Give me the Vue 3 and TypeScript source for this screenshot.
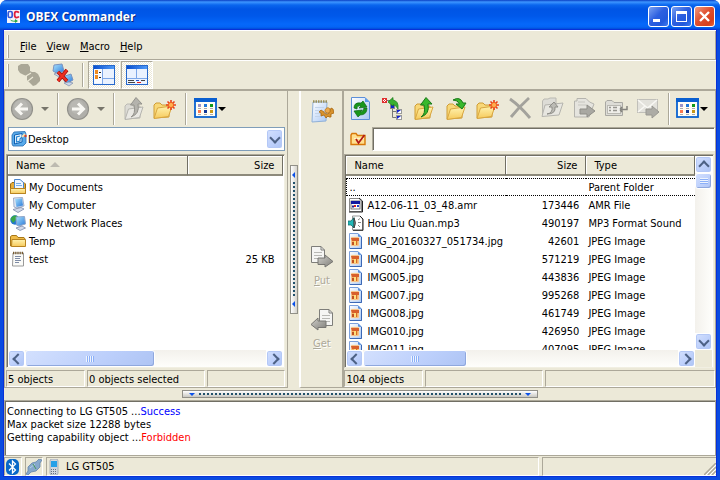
<script setup lang="ts">
import { ref } from 'vue'

interface Item {
  icon: string
  name: string
  size: string
  type?: string
}

const menus: string[] = ['File', 'View', 'Macro', 'Help']

const localItems: Item[] = [
  { icon: 'docs', name: 'My Documents', size: '' },
  { icon: 'computer', name: 'My Computer', size: '' },
  { icon: 'network', name: 'My Network Places', size: '' },
  { icon: 'folder', name: 'Temp', size: '' },
  { icon: 'text', name: 'test', size: '25 KB' },
]

const remoteItems: Item[] = [
  { icon: '', name: '..', size: '', type: 'Parent Folder' },
  { icon: 'program', name: 'A12-06-11_03_48.amr', size: '173446', type: 'AMR File' },
  { icon: 'sound', name: 'Hou Liu Quan.mp3', size: '490197', type: 'MP3 Format Sound' },
  { icon: 'jpeg', name: 'IMG_20160327_051734.jpg', size: '42601', type: 'JPEG Image' },
  { icon: 'jpeg', name: 'IMG004.jpg', size: '571219', type: 'JPEG Image' },
  { icon: 'jpeg', name: 'IMG005.jpg', size: '443836', type: 'JPEG Image' },
  { icon: 'jpeg', name: 'IMG007.jpg', size: '995268', type: 'JPEG Image' },
  { icon: 'jpeg', name: 'IMG008.jpg', size: '461749', type: 'JPEG Image' },
  { icon: 'jpeg', name: 'IMG010.jpg', size: '426950', type: 'JPEG Image' },
  { icon: 'jpeg', name: 'IMG011.jpg', size: '407095', type: 'JPEG Image' },
]

const remoteTools = [
  { icon: 'refresh', label: 'Refresh', off: false },
  { icon: 'tree', label: 'Root folder', off: false },
  { icon: 'up', label: 'Up one level', off: false },
  { icon: 'into', label: 'Open folder', off: false },
  { icon: 'newfolder', label: 'New folder', off: false },
  { icon: 'delete', label: 'Delete', off: true },
  { icon: 'move', label: 'Move', off: true },
  { icon: 'copyto', label: 'Copy to', off: true },
  { icon: 'rename', label: 'Rename', off: true },
  { icon: 'send', label: 'Send', off: true },
]

const location = ref('Desktop')
const address = ref('')
</script>

<template>
  <svg class="defs" aria-hidden="true">
    <defs>
      <linearGradient id="gFolder" x1="0" y1="0" x2="0" y2="1">
        <stop offset="0" stop-color="#fff3b0" /><stop offset="1" stop-color="#f6ca5c" />
      </linearGradient>
      <linearGradient id="gGray" x1="0" y1="0" x2="1" y2="1">
        <stop offset="0" stop-color="#d0cfca" /><stop offset="1" stop-color="#7f7e79" />
      </linearGradient>
      <linearGradient id="gBlue" x1="0" y1="0" x2="1" y2="1">
        <stop offset="0" stop-color="#a9e4ff" /><stop offset="1" stop-color="#2a78d8" />
      </linearGradient>
      <linearGradient id="gPage" x1="0" y1="0" x2="1" y2="1">
        <stop offset="0" stop-color="#ffffff" /><stop offset="1" stop-color="#a9c8f5" />
      </linearGradient>
      <linearGradient id="gBar" x1="0" y1="0" x2="1" y2="0">
        <stop offset="0" stop-color="#0a4fd0" /><stop offset="1" stop-color="#4f9af8" />
      </linearGradient>
    </defs>

    <symbol id="logo" viewBox="0 0 13 13">
      <rect width="13" height="13" fill="#f3f4fc" />
      <rect x="1.200" y="1.500" width="4" height="6" rx="1.500" fill="none" stroke="#3558d8" stroke-width="1.700" />
      <path d="M12 2.600Q10.800 1.500 9 1.600Q7.600 1.800 7.600 4.500Q7.600 7.400 9.200 7.600Q11 7.700 12 6.500" fill="none" stroke="#e0203c" stroke-width="1.800" />
      <path d="M3 9.500Q5 11 8 10.500V9L11 11L8 13V11.800Q4 12 3 9.500" fill="#28a745" />
    </symbol>
    <symbol id="connect" viewBox="0 0 24 24">
      <path d="M0 3L3 1L10 1L12 4L12 8L14 9L17 9L20 11L22 15L22 18L18 22L15 23L13 21L11 19L9 17L9 13L6 12L2 10L0 7Z" fill="#aaa797" />
      <path d="M8 13L13 10M10 18L15 14" stroke="#ece9d8" stroke-width="1.200" />
    </symbol>
    <symbol id="disconnect" viewBox="0 0 24 24">
      <path d="M3 2L11 1L13 8L7 11L2 8Z" fill="url(#gBlue)" stroke="#7b93c0" />
      <path d="M3 11L8 9L12 12L8 14Z" fill="#cdd6e8" stroke="#7d8cab" stroke-width=".7" />
      <path d="M14 13L20 11L22 17L17 20L13 18Z" fill="url(#gBlue)" stroke="#7b93c0" />
      <path d="M13 20L18 19L22 20L18 23Z" fill="#cbd5e8" stroke="#7d8cab" stroke-width=".7" />
      <path d="M7 9L16 18M16 7L7 18" stroke="#9e1010" stroke-width="3.600" />
      <path d="M7 9L16 18M16 7L7 18" stroke="#ee3020" stroke-width="2.200" />
    </symbol>
    <symbol id="pane1" viewBox="0 0 22 20">
      <rect x=".5" y=".5" width="21" height="19" fill="#eaf2ff" stroke="#2668cc" />
      <rect x="1" y="1" width="20" height="3" fill="url(#gBar)" />
      <path d="M10 13.500H21" stroke="#7da7e8" />
      <rect x="1" y="4" width="9" height="14" fill="#f7faff" />
      <path d="M9.500 4V19" stroke="#7da7e8" />
      <rect x="2" y="5" width="3" height="4" fill="#ee8a20" /><rect x="2" y="10" width="3" height="4" fill="#ee8a20" />
      <path d="M6 7.500H8M6 12.500H8" stroke="#222" />
    </symbol>
    <symbol id="pane2" viewBox="0 0 22 20">
      <rect x=".5" y=".5" width="21" height="19" fill="#eaf2ff" stroke="#2668cc" />
      <rect x="1" y="1" width="20" height="3" fill="url(#gBar)" />
      <path d="M10.500 4V13M1 13.500H21" stroke="#7da7e8" />
      <path d="M2 15.500H8M15 15.500H19" stroke="#444" /><path d="M2 17.500H9" stroke="#444" />
      <path d="M11 17.500H15" stroke="#e02020" /><path d="M10 15.500H13" stroke="#2050d0" />
    </symbol>
    <symbol id="back" viewBox="0 0 24 24">
      <circle cx="12" cy="12" r="10.500" fill="#b0afaa" stroke="#93928c" stroke-width="1.200" />
      <circle cx="11" cy="10" r="7" fill="#c2c1bc" opacity=".5" />
      <path d="M18 12H7M12 6.500L6.500 12L12 17.500" fill="none" stroke="#f8f7f3" stroke-width="3" />
    </symbol>
    <symbol id="forward" viewBox="0 0 24 24">
      <circle cx="12" cy="12" r="10.500" fill="#b0afaa" stroke="#93928c" stroke-width="1.200" />
      <circle cx="11" cy="10" r="7" fill="#c2c1bc" opacity=".5" />
      <path d="M6 12H17M12 6.500L17.500 12L12 17.500" fill="none" stroke="#f8f7f3" stroke-width="3" />
    </symbol>
    <symbol id="fold" viewBox="0 0 24 24">
      <path d="M3 22V9L5 7H9L11 9H18V21Z" fill="#f8d878" stroke="#cf9c34" />
      <path d="M3 22.500L6.500 12L21 10L17.500 20.500Z" fill="url(#gFolder)" stroke="#d8a640" />
    </symbol>
    <symbol id="foldgray" viewBox="0 0 24 24">
      <path d="M3 22V9L5 7H9L11 9H18V21Z" fill="#dcdbd5" stroke="#bbbab4" />
      <path d="M3 22.500L6.500 12L21 10L17.500 20.500Z" fill="#e9e8e3" stroke="#b5b4ae" />
    </symbol>
    <symbol id="up" viewBox="0 0 24 24">
      <use href="#fold" />
      <path d="M9 20Q14 17 12 8H8.500L14 .5L20 7H16Q18 17 9 20Z" fill="#39b82c" stroke="#187818" />
    </symbol>
    <symbol id="upoff" viewBox="0 0 24 24">
      <use href="#foldgray" />
      <path d="M9 20Q14 17 12 8H8.500L14 .5L20 7H16Q18 17 9 20Z" fill="#b4b3ad" stroke="#93928c" />
    </symbol>
    <symbol id="into" viewBox="0 0 24 24">
      <use href="#fold" />
      <path d="M9 3Q16 -1 19 6H22L18 12L12 7H15.500Q14 3 9 3Z" fill="#39b82c" stroke="#187818" />
    </symbol>
    <symbol id="newfolder" viewBox="0 0 24 24">
      <g transform="translate(-2 -1)"><use href="#fold" width="24" height="24" /></g>
      <path d="M18 3V13M13 8H23M14.500 4.500L21.500 11.500M21.500 4.500L14.500 11.500" stroke="#e8401c" stroke-width="1.600" />
      <circle cx="18" cy="8" r="2.600" fill="#ffb050" stroke="#f06020" />
    </symbol>
    <symbol id="views" viewBox="0 0 24 24">
      <rect x="1" y="2" width="21" height="18" fill="#fffdf4" stroke="#0a63d0" stroke-width="1.800" />
      <rect x="0" y="1" width="23" height="4" fill="#0a5fd0" />
      <path d="M4 7H7V10H4Z" fill="#9a94c8" /><path d="M10 7H13V10H10Z" fill="#2078d8" /><path d="M16 7H19V10H16Z" fill="#109818" />
      <path d="M4 13H7V16H4Z" fill="#f87850" /><path d="M10 13H13V16H10Z" fill="#103898" /><path d="M16 13H19V16H16Z" fill="#c89818" />
      <path d="M4 11.500H7M10 11.500H13M16 11.500H19M4 17.500H7M10 17.500H13M16 17.500H19" stroke="#aaa" />
    </symbol>
    <symbol id="refresh" viewBox="0 0 24 24">
      <path d="M3.500 .5H17L21.500 5V22.500H3.500Z" fill="url(#gPage)" stroke="#5c8fd8" />
      <path d="M17 .5V5H21.500Z" fill="#5c9ae8" />
      <path d="M6 11Q6 5 13 6L15 4L19 10L11 11L13 9Q9 8 9 12Z" fill="#18961c" stroke="#0d6814" stroke-width=".7" />
      <path d="M19 11Q19 18 12 18L10 20L6 14L14 13L12 15Q15 15 16 11Z" fill="#18961c" stroke="#0d6814" stroke-width=".7" />
    </symbol>
    <symbol id="tree" viewBox="0 0 24 24">
      <path d="M7 3.500H10M12.500 11V20.500H17M12.500 14.500H17" fill="none" stroke="#777" />
      <rect x="2.500" y="1.500" width="4" height="4" fill="#fff" stroke="#e03030" /><path d="M3 2L6 5M6 2L3 5" stroke="#e03030" />
      <rect x="10.500" y="7.500" width="4" height="4" fill="#1020d0" stroke="#888" />
      <path d="M8 5L13 .5V3Q19 4 18 12Q16 8 13 7.500V9Z" fill="#38b030" stroke="#187818" stroke-width=".7" />
      <rect x="16.500" y="12.500" width="5" height="4" fill="#1020d0" stroke="#999" /><path d="M17 16L21 13V16Z" fill="#fff" />
      <rect x="16.500" y="18.500" width="5" height="4" fill="#1020d0" stroke="#999" /><path d="M17 22L21 19V22Z" fill="#fff" />
    </symbol>
    <symbol id="delete" viewBox="0 0 24 24">
      <path d="M2 2Q12 9 22 21M21 1Q12 9 3 20" fill="none" stroke="#a3a29c" stroke-width="2.800" />
    </symbol>
    <symbol id="move" viewBox="0 0 24 24">
      <path d="M2.500 18V4L4 2H8L10 1H16V7H19" fill="#dddcd6" stroke="#bab9b2" />
      <path d="M2 19.500L5 8L23 6L19 18Z" fill="#e7e6e0" stroke="#b5b4ae" />
      <path d="M7 17Q13 16 12 10H9L14 5L18 10H15Q16 17 7 17Z" fill="#bcbbb5" stroke="#8f8e88" />
    </symbol>
    <symbol id="copyto" viewBox="0 0 24 24">
      <path d="M2.500 20V4H5V1.500H14L17.500 5L22 7L17 20Z" fill="#e5e4de" stroke="#b5b4ae" />
      <path d="M6 5H13M6 8H15" stroke="#c7c6c0" />
      <path d="M8 12H15V8L23 14L15 20V17H8Z" fill="#a9a8a2" stroke="#8f8e88" />
    </symbol>
    <symbol id="rename" viewBox="0 0 24 24">
      <path d="M1.500 18.500V5L3 3.500H8L10 5.500H18.500V18.500Z" fill="#dddcd6" stroke="#a9a8a2" />
      <rect x="3.500" y="8.500" width="13" height="8" fill="#efeee9" stroke="#bab9b2" />
      <path d="M5 10.500H7M5 13.500H7M9 10.500H13M9 13.500H13" stroke="#96958f" stroke-width="1.500" />
      <path d="M16 12.500H23V9M16 12.500L18 10M16 12.500L18 15" fill="none" stroke="#85847e" stroke-width="1.500" />
    </symbol>
    <symbol id="send" viewBox="0 0 24 24">
      <rect x="1.500" y="2.500" width="20" height="13" fill="#e3e2dc" stroke="#c0bfb9" />
      <path d="M2 3L11.500 11L21 3M2 15L9 9M21 15L14 9" fill="none" stroke="#f9f8f4" stroke-width="1.500" />
      <path d="M10 12H16V9L23 15L16 21V18H10Z" fill="#adaca6" stroke="#999892" />
    </symbol>
    <symbol id="notepad" viewBox="0 0 24 24">
      <path d="M3 3H17L16 22L2 23Z" fill="url(#gPage)" stroke="#8fb0d8" />
      <path d="M3 2.500H17" stroke="#9a8f58" stroke-width="2.500" stroke-dasharray="1.500 1" />
      <path d="M5 8.500H14M5 11.500H10M5 14.500H12M5 17.500H12" stroke="#c3d4ea" />
      <path d="M9 13L11 11L14 13Q14 15 17 15Q20 15 20 12L21 9L23 10L24 14L21 15L21 18H19L18 17L16 19L14 16L11 17L11 14Z" fill="#d8922c" stroke="#a8660e" stroke-width=".8" />
      <path d="M15 11Q17 7 20 10V13Q18 15 15 13Z" fill="#eda94c" stroke="#b87820" stroke-width=".8" />
    </symbol>
    <symbol id="put" viewBox="0 0 24 24">
      <path d="M1.500 1.500H11L14.500 5V17.500H1.500Z" fill="#f5f5f3" stroke="#7e7e7a" /><path d="M11 1.500V5H14.500" fill="none" stroke="#7e7e7a" />
      <path d="M4 7.500H12M4 10.500H12M4 13.500H9" stroke="#b8b8b4" />
      <path d="M8 13H15V10L23 16.500L15 22V19.500H8Z" fill="url(#gGray)" stroke="#777672" />
    </symbol>
    <symbol id="get" viewBox="0 0 24 24">
      <path d="M9.500 1.500H19L22.500 5V17.500H9.500Z" fill="#f5f5f3" stroke="#7e7e7a" /><path d="M19 1.500V5H22.500" fill="none" stroke="#7e7e7a" />
      <path d="M12 7.500H20M12 10.500H20M14 13.500H20" stroke="#b8b8b4" />
      <path d="M16 13H8V10L1 16.500L8 22V19.500H16Z" fill="url(#gGray)" stroke="#777672" />
    </symbol>

    <symbol id="desktop" viewBox="0 0 16 16">
      <path d="M3 1L14 .5L15 3V12L12 15H2L1 13V4Z" fill="#58aaea" stroke="#2a6cb0" stroke-width=".8" />
      <path d="M3.500 4L11 2.500V11L3.500 13Z" fill="#e8f5ff" stroke="#0f5fb0" />
      <path d="M9 5L5.500 6V11L9 10V8L13 4" fill="none" stroke="#2582d0" stroke-width="1.200" />
      <path d="M11 6L14 3" stroke="#f6e0b0" stroke-width="2" /><circle cx="14.500" cy="5" r="1.200" fill="#e03c20" />
    </symbol>
    <symbol id="docs" viewBox="0 0 16 16">
      <path d="M.5 5L2 3.500H14L15.500 5V14.500H.5Z" fill="#e6ad38" stroke="#9c6c12" />
      <path d="M4.500 .5H10L13.500 3.500V10H4.500Z" fill="#eef6ff" stroke="#4b86cc" /><path d="M6 4.500H11M6 6.500H12" stroke="#77aee8" />
      <path d="M.500 9.500H15.500V14.500H.5Z" fill="url(#gFolder)" stroke="#b98420" />
    </symbol>
    <symbol id="computer" viewBox="0 0 16 16">
      <path d="M3.500 1L12.500 .5L14 9L7 11L4 10Z" fill="#dfe6f2" stroke="#8d9dbd" stroke-width=".8" />
      <path d="M5 2L12 1.200L13 8.500L6.500 10Z" fill="url(#gBlue)" />
      <path d="M3 12.500L11 10.500L14 12L8 15.500Z" fill="#d3dae9" stroke="#7c89a9" stroke-width=".8" />
    </symbol>
    <symbol id="network" viewBox="0 0 16 16">
      <circle cx="5" cy="5" r="4.700" fill="#2476d0" /><path d="M.5 4Q3 -1 7.500 1L6 5L3 8Z" fill="#38a848" />
      <path d="M6 2L14.500 1.500L15.500 9L9 11L6.500 10Z" fill="url(#gBlue)" stroke="#90a4c6" />
      <path d="M6 13L12 11L15.500 13L10 15.500Z" fill="#d3dae9" stroke="#7c89a9" stroke-width=".8" />
    </symbol>
    <symbol id="folder" viewBox="0 0 16 16">
      <path d="M.5 13V3.500L2 2.500H6.500L8 4.500H14L15 6V13Z" fill="#f0bc48" stroke="#a87818" />
      <path d="M2 6.500H15.500V13.500H1.500Z" fill="url(#gFolder)" stroke="#b98420" />
    </symbol>
    <symbol id="text" viewBox="0 0 16 16">
      <path d="M3 2H13.500V15H2.500Z" fill="#fbfbf8" stroke="#9a9a9a" />
      <path d="M3 2H13" stroke="#775b30" stroke-width="2.500" stroke-dasharray="1.200 1" />
      <path d="M5 5.500H11M5 7.500H10M5 9.500H11M5 11.500H9" stroke="#7e8ba5" />
    </symbol>
    <symbol id="program" viewBox="0 0 16 16">
      <path d="M1.500 1.500H11L13.500 4V14.500H1.500Z" fill="#fff" stroke="#888" /><path d="M1 15H14.500V4L11 1" fill="none" stroke="#222" />
      <rect x="3" y="4" width="9" height="8" fill="#fff" stroke="#555" stroke-width=".8" /><rect x="3" y="4" width="9" height="3" fill="#1018a0" />
      <path d="M4 8.500H6V10.500H4Z" fill="#20208c" /><path d="M6 8H8V10H6Z" fill="#d02020" /><path d="M9 8H11V10H9Z" fill="#2040d0" />
    </symbol>
    <symbol id="sound" viewBox="0 0 16 16">
      <path d="M4.500 1H12L14.500 4V15H4.500Z" fill="#fff" stroke="#999" /><path d="M5 15.300H15V4L12 1" fill="none" stroke="#222" />
      <path d="M0 6L3 6L6 2.500V13L3 10H0Z" fill="#20b8b8" stroke="#1a6c6c" stroke-width=".8" /><path d="M6 3Q9 8 6 13Z" fill="#999" stroke="#333" stroke-width=".8" />
      <path d="M10 7.500H13M10 5L12 3.500M10 10L12 12" stroke="#888" />
    </symbol>
    <symbol id="jpeg" viewBox="0 0 16 16">
      <path d="M1.500 .5H10L13.500 4V15.500H1.500Z" fill="url(#gPage)" stroke="#7ba0dc" /><path d="M13.500 4V15.500H2" fill="none" stroke="#3c68b4" />
      <path d="M10 .5V4H13.500Z" fill="#5890dc" />
      <rect x="3" y="4" width="8" height="9" fill="#f4b060" stroke="#f8e7d5" stroke-width=".7" />
      <path d="M3 5H11V8H4Z" fill="#d8602c" /><path d="M4 9H6V12H4Z" fill="#c05020" /><path d="M8 8H9V12H8Z" fill="#d86a24" /><path d="M6 8H8V12H6Z" fill="#ffdf80" />
    </symbol>
    <symbol id="check" viewBox="0 0 16 16">
      <path d="M1 13.500V4L2 2.500H6L7.500 4.500H15V13.500Z" fill="#ffdf8e" stroke="#d87808" stroke-width="1.400" />
      <path d="M4 7.500H14" stroke="#fff4c8" /><path d="M6 8L8.500 12L14.500 4" fill="none" stroke="#b01818" stroke-width="1.700" />
    </symbol>
    <symbol id="bluetooth" viewBox="0 0 16 16">
      <rect x="1" width="13" height="16" rx="5" fill="#0868c8" />
      <path d="M4 4.500L10.500 11L7.500 14V2L10.500 5L4 11.500" fill="none" stroke="#fff" stroke-width="1.300" />
    </symbol>
    <symbol id="plug" viewBox="0 0 16 16">
      <path d="M0 15L2 12L2 8L6 4L10 3L13 0L16 1L14 4L14 8L10 12L5 13L2 16Z" fill="#86a8cc" stroke="#6384aa" stroke-width=".8" />
      <path d="M4 9L9 5" stroke="#b4d0e8" /><path d="M7 5L10 10" stroke="#49985a" />
    </symbol>
    <symbol id="phone" viewBox="0 0 16 16">
      <rect x="3" y="0" width="8" height="16" rx="2" fill="#d2d6de" stroke="#9aa2af" stroke-width=".8" />
      <rect x="4" y="2" width="6" height="6" fill="#26a0e8" />
      <path d="M4 10.500H10M4 12.500H10M4 14.500H10" stroke="#667080" stroke-dasharray="1 1" />
    </symbol>
  </svg>

  <div class="window">
    <header class="titlebar">
      <svg class="logo"><use href="#logo" /></svg>
      <h1>OBEX Commander</h1>
      <div class="winbuttons">
        <button aria-label="Minimize"><svg viewBox="0 0 19 19"><path d="M4 12H11V15H4Z" fill="#fff" /></svg></button>
        <button aria-label="Maximize"><svg viewBox="0 0 19 19"><path d="M4 4H15V15H4Z M5 7V14H14V7Z" fill="#fff" fill-rule="evenodd" /></svg></button>
        <button class="close" aria-label="Close"><svg viewBox="0 0 19 19"><path d="M5 5L14 14M14 5L5 14" stroke="#fff" stroke-width="2.400" /></svg></button>
      </div>
    </header>

    <div class="client">
      <nav class="menubar">
        <span class="grip" />
        <button v-for="m in menus" :key="m"><u>{{ m[0] }}</u>{{ m.slice(1) }}</button>
      </nav>

      <div class="mainbar">
        <span class="grip" />
        <button class="tool" aria-label="Connect" disabled><svg class="i24"><use href="#connect" /></svg></button>
        <button class="tool" aria-label="Disconnect"><svg class="i24"><use href="#disconnect" /></svg></button>
        <span class="sep" />
        <button class="toggle" aria-label="Show local panel" aria-pressed="true"><svg><use href="#pane1" /></svg></button>
        <button class="toggle" aria-label="Show log panel" aria-pressed="true"><svg><use href="#pane2" /></svg></button>
      </div>

      <main class="work">
        <section class="panel local">
          <div class="tools">
            <div class="group">
              <button class="tool" aria-label="Back"><svg class="i24"><use href="#back" /></svg></button>
              <button class="drop dim" aria-label="Back history" />
            </div>
            <span class="sep" />
            <div class="group">
              <button class="tool" aria-label="Forward"><svg class="i24"><use href="#forward" /></svg></button>
              <button class="drop dim" aria-label="Forward history" />
            </div>
            <span class="sep" />
            <div class="group spaced">
              <button class="tool" aria-label="Up one level"><svg class="i24"><use href="#upoff" /></svg></button>
              <button class="tool" aria-label="New folder"><svg class="i24"><use href="#newfolder" /></svg></button>
            </div>
            <span class="sep wide" />
            <button class="tool" aria-label="Views"><svg class="i24"><use href="#views" /></svg></button>
            <button class="drop tight" aria-label="Choose view" />
          </div>

          <div class="combo">
            <svg class="i16"><use href="#desktop" /></svg>
            <select v-model="location" aria-label="Local folder"><option>Desktop</option></select>
            <span class="arrow down" />
          </div>

          <div class="list">
            <div class="viewport">
              <div class="rows">
                <table>
                  <colgroup><col class="c-local" /><col /></colgroup>
                  <thead><tr><th>Name <i class="sorted" /></th><th class="num">Size</th></tr></thead>
                  <tbody>
                    <tr v-for="f in localItems" :key="f.name">
                      <td><span class="cell"><svg class="i16"><use :href="'#' + f.icon" /></svg>{{ f.name }}</span></td>
                      <td class="num">{{ f.size }}</td>
                    </tr>
                  </tbody>
                </table>
              </div>
            </div>
            <div class="hscroll">
              <button class="arrow left" aria-label="Scroll left" />
              <span class="track"><span class="thumb half" /></span>
              <button class="arrow right" aria-label="Scroll right" />
            </div>
          </div>
          <footer class="counts"><span>5 objects</span><span>0 objects selected</span><span /></footer>
        </section>

        <div class="vsplit"><span class="handle"><i /></span></div>

        <aside class="transfer">
          <button class="tool" aria-label="Edit"><svg class="i24"><use href="#notepad" /></svg></button>
          <div class="moves">
            <button disabled><svg class="i24"><use href="#put" /></svg><span><u>P</u>ut</span></button>
            <button disabled><svg class="i24"><use href="#get" /></svg><span><u>G</u>et</span></button>
          </div>
        </aside>

        <section class="panel remote">
          <div class="tools">
            <button v-for="t in remoteTools" :key="t.icon" class="tool" :aria-label="t.label" :disabled="t.off">
              <svg class="i24"><use :href="'#' + t.icon" /></svg>
            </button>
            <span class="sep" />
            <div class="group">
              <button class="tool" aria-label="Views"><svg class="i24"><use href="#views" /></svg></button>
              <button class="drop tight" aria-label="Choose view" />
            </div>
          </div>

          <div class="address">
            <button class="tool" aria-label="Go to folder"><svg class="i16"><use href="#check" /></svg></button>
            <input v-model="address" type="text" aria-label="Remote folder path" />
          </div>

          <div class="list">
            <div class="viewport">
              <div class="rows">
                <table>
                  <colgroup><col class="c-name" /><col class="c-size" /><col /></colgroup>
                  <thead><tr><th>Name</th><th class="num">Size</th><th>Type</th></tr></thead>
                  <tbody>
                    <tr v-for="(f, i) in remoteItems" :key="f.name" :class="{ focused: i === 0 }">
                      <td><span class="cell"><svg v-if="f.icon" class="i16"><use :href="'#' + f.icon" /></svg>{{ f.name }}</span></td>
                      <td class="num">{{ f.size }}</td>
                      <td>{{ f.type }}</td>
                    </tr>
                  </tbody>
                </table>
              </div>
              <div class="vscroll">
                <button class="arrow up" aria-label="Scroll up" />
                <span class="track"><span class="thumb short" /></span>
                <button class="arrow down" aria-label="Scroll down" />
              </div>
            </div>
            <div class="hscroll">
              <button class="arrow left" aria-label="Scroll left" />
              <span class="track"><span class="thumb third" /></span>
              <button class="arrow right" aria-label="Scroll right" />
              <span class="corner" />
            </div>
          </div>
          <footer class="counts"><span>104 objects</span><span /><span /></footer>
        </section>
      </main>

      <div class="hsplit"><span class="handle"><i /></span></div>

      <section class="log" aria-label="Log">
        <p>Connecting to LG GT505 ...<span class="ok">Success</span></p>
        <p>Max packet size 12288 bytes</p>
        <p>Getting capability object ...<span class="bad">Forbidden</span></p>
      </section>

      <footer class="status">
        <span><svg class="i16"><use href="#bluetooth" /></svg></span>
        <span><svg class="i16"><use href="#plug" /></svg></span>
        <span class="device"><svg class="i16"><use href="#phone" /></svg>LG GT505</span>
        <span class="last"><svg class="sizer" viewBox="0 0 12 12"><path d="M0 12L12 0M4 12L12 4M8 12L12 8" stroke="#aca899" stroke-width="1.500" /><path d="M2 12L12 2M6 12L12 6M10 12L12 10" stroke="#fff" /></svg></span>
      </footer>
    </div>
  </div>
</template>

<style>
body { margin: 0; background: #fff; }
</style>

<style scoped>
* { box-sizing: border-box; }
.defs { position: absolute; width: 0; height: 0; }
button, input, select { font: inherit; color: inherit; margin: 0; padding: 0; border: 0; background: none; border-radius: 0; }
svg { display: block; flex: none; }
.i24 { width: 24px; height: 24px; }
.i16 { width: 16px; height: 16px; }

.window {
  display: flex; flex-direction: column; height: 100vh; min-width: 640px; overflow: hidden;
  border-radius: 7px 7px 0 0; background: #0a4be0; color: #000;
  font: 11px/13px Tahoma, "DejaVu Sans Condensed", "Liberation Sans", sans-serif;
}
.titlebar {
  display: flex; align-items: center; flex: none; height: 30px; padding: 3px 5px 0 7px;
  background: linear-gradient(#0a3fc4 0, #3d95ff 2px, #0a66ee 5px, #0055e5 9px, #0058ea 16px, #0568fa 24px, #0464f6 27px, #0040c8 30px);
}
.logo { width: 13px; height: 13px; }
h1 { flex: 1; margin: 0 0 0 6px; color: #fff; font: bold 12px/16px "Trebuchet MS", "Open Sans", sans-serif; text-shadow: 1px 1px #0a2a80; }
.winbuttons { display: flex; gap: 2px; }
.winbuttons button {
  width: 21px; height: 21px; border: 1px solid #fff; border-radius: 3px;
  background: linear-gradient(135deg, #7ba2f2, #2d5fe0 45%, #2259dc 75%, #3d7cf0);
}
.winbuttons .close { background: linear-gradient(135deg, #f09a80, #e05030 45%, #d8401c 80%, #e86838); }

.client {
  display: flex; flex-direction: column; flex: 1; min-height: 0; margin: 0 4px 4px;
  background: #ece9d8; border-top: 1px solid #fff; box-shadow: 0 0 0 1px #0831d9;
}
.menubar { display: flex; align-items: center; flex: none; height: 29px; padding: 2px 0 0 3px; border-bottom: 1px solid #aca899; border-right: 1px solid #aca899; }
.menubar button { padding: 0 5px; height: 20px; }
.menubar .grip { margin-right: 6px; }
.grip { width: 2px; height: 23px; border-left: 1px solid #fff; border-right: 1px solid #aca899; }
.mainbar { display: flex; align-items: center; flex: none; height: 30px; padding-left: 3px; border-top: 1px solid #fff; border-bottom: 1px solid #aca899; }
.mainbar .tool { margin-left: 9px; }
.mainbar .sep { height: 24px; margin: 0 4px 0 7px; }
.sep { flex: none; width: 2px; height: 32px; border-left: 1px solid #aca899; border-right: 1px solid #fff; }
.toggle {
  display: grid; place-items: center; width: 32px; height: 28px; margin-right: 1px;
  border: 1px solid; border-color: #aca899 #fff #fff #aca899;
  background: repeating-conic-gradient(#fff 0 25%, #ece9d8 0 50%) 0 0 / 2px 2px;
}
.toggle svg { width: 22px; height: 20px; }
.tool { flex: none; }

.work { display: flex; flex: 1; min-height: 0; border-top: 1px solid #aca899; }
.panel { display: flex; flex-direction: column; min-width: 0; padding: 0 2px 0 1px; border: 1px solid #aca899; border-top: 0; }
.local { flex: 282 1 0; }
.remote { flex: 374 1 0; padding: 0; }
.tools { display: flex; align-items: center; flex: none; height: 35px; }
.local .tools { padding-left: 4px; }
.local .sep { margin: 0 7px 0 1px; }
.local .sep.wide { margin-left: 8px; }
.group { display: flex; align-items: center; }
.spaced { gap: 7px; }
.remote .tools { gap: 8px; padding-left: 4px; }
.remote .group { margin-left: -2px; }
.drop { display: grid; place-items: center; width: 22px; height: 24px; }
.drop::before { content: ""; border: solid transparent; border-width: 4px 4px 0; border-top-color: #000; }
.drop.dim::before { border-top-color: #77756b; }
.drop.tight { width: 8px; }

.combo { display: grid; grid-template-columns: 19px 1fr 17px; align-items: center; flex: none; height: 24px; margin: 1px 0 3px 2px; padding: 1px 1px 1px 2px; border: 1px solid #7f9db9; background: #fff; }
.combo > svg { grid-area: 1 / 1; pointer-events: none; z-index: 1; }
.combo select { grid-area: 1 / 1 / 2 / 4; height: 20px; padding-left: 17px; appearance: none; }
.combo > .arrow { grid-area: 1 / 3; height: 20px; pointer-events: none; }
.address { display: flex; align-items: center; flex: none; height: 25px; margin-bottom: 3px; padding-left: 6px; }
.address input { flex: 1; min-width: 0; height: 24px; margin-left: 6px; padding: 0 3px; background: #fff; border: 1px solid; border-color: #aca899 #fff #fff #aca899; box-shadow: inset 1px 1px #716f64; outline: 0; }

.list { display: flex; flex-direction: column; flex: 1; min-height: 0; background: #fff; border: 1px solid; border-color: #aca899 #f1efe2 #f1efe2 #aca899; box-shadow: inset 1px 1px #716f64; padding: 1px 1px 0 1px; }
.remote .list { margin-right: 1px; }
.viewport { display: flex; flex: 1; min-height: 0; }
.rows { flex: 1; min-width: 0; overflow: hidden; }
table { width: 100%; table-layout: fixed; border-collapse: separate; border-spacing: 0; }
.c-local { width: 180px; }
.c-name { width: 160px; }
.c-size { width: 80px; }
th { height: 20px; padding: 0 8px; font-weight: normal; text-align: left; background: #ece9d8; border-bottom: 2px solid #8d8a7b; border-right: 1px solid #716f64; box-shadow: inset 1px 1px #fff; }
thead::after { content: ""; display: block; height: 2px; }
.sorted { display: inline-block; margin-left: 2px; vertical-align: 2px; border: solid transparent; border-width: 0 5px 5px; border-bottom-color: #bdbab0; }
td { height: 18px; padding: 0 3px 0 2px; white-space: nowrap; }
.num { text-align: right; }
td.num { padding-right: 7px; }
.local td.num { padding-right: 9px; }
.cell { display: flex; align-items: center; gap: 3px; }
.focused td { border: dotted #000; border-width: 1px 0; height: 18px; }
.focused td:first-child { border-left-width: 1px; }

.hscroll { display: flex; flex: none; height: 17px; }
.vscroll { display: flex; flex-direction: column; flex: none; width: 17px; }
.track { display: flex; flex: 1; background: linear-gradient(#f3f1ec, #fefefb); }
.vscroll .track { background: linear-gradient(90deg, #f3f1ec, #fefefb); }
.thumb, .arrow { display: grid; place-items: center; border: 1px solid #fff; border-radius: 3px; background: linear-gradient(135deg, #d3e0fe, #bccffb 60%, #aec4f4); box-shadow: inset 0 0 0 1px #b4c8f6; }
.thumb { box-shadow: inset -1px -1px #8fa8de; }
.half { width: 54%; }
.third { width: 33%; }
.short { width: 17px; height: 16px; }
.thumb::before { content: ""; width: 8px; height: 6px; background: repeating-linear-gradient(90deg, #eef4fe 0 1px, #8cb0f8 1px 2px); }
.short::before { background: repeating-linear-gradient(#eef4fe 0 1px, #8cb0f8 1px 2px); }
.arrow { flex: none; width: 17px; height: 17px; }
.arrow::before { content: ""; width: 6px; height: 6px; border: solid #4d6185; border-width: 2px 0 0 2px; }
.arrow.left::before { transform: translateX(1px) rotate(-45deg); }
.arrow.right::before { transform: translateX(-1px) rotate(135deg); }
.arrow.up::before { transform: translateY(1px) rotate(45deg); }
.arrow.down::before { transform: translateY(-1px) rotate(225deg); }
.corner { width: 17px; background: #ece9d8; }

.counts { display: grid; grid-template-columns: 79px 118px 1fr; gap: 2px; flex: none; height: 19px; padding: 2px 0 0; }
.counts span { padding: 2px 1px 0; border: 1px solid; border-color: #aca899 #fff #fff #aca899; }

.vsplit { display: flex; justify-content: center; align-items: center; flex: none; width: 11px; }
.handle { display: flex; align-items: center; gap: 4px; border: 1px solid #919088; }
.handle i { flex: 1; }
.handle::before, .handle::after { content: ""; border: solid transparent; }
.vsplit .handle { flex-direction: column; width: 8px; height: 50%; padding: 6px 0; background: linear-gradient(90deg, #fff, #d4d2ca); }
.vsplit i { width: 2px; background: repeating-linear-gradient(#20506a 0 2px, transparent 2px 4px); }
.vsplit .handle::before, .vsplit .handle::after { border-width: 3px 3px 3px 0; border-right-color: #0a50e8; }
.hsplit { display: flex; align-items: center; justify-content: center; flex: none; height: 12px; }
.hsplit .handle { width: 50%; height: 8px; padding: 0 6px; background: linear-gradient(#fff, #c9c8c2); }
.hsplit i { height: 2px; background: repeating-linear-gradient(90deg, #20506a 0 2px, transparent 2px 4px); }
.hsplit .handle::before, .hsplit .handle::after { border-width: 3px 3px 0; border-top-color: #0a50e8; }

.transfer { display: flex; flex-direction: column; align-items: center; flex: none; width: 44px; padding-top: 8px; border: solid; border-width: 0 1px 1px 2px; border-color: #fff #aca899 #aca899 #fff; }
.moves { display: flex; flex-direction: column; gap: 21px; margin: auto 0 37px; }
.moves button { display: flex; flex-direction: column; align-items: center; gap: 5px; color: #aca899; text-shadow: 1px 1px #fff; }

.log { flex: none; height: 56px; padding: 4px 2px; background: #fff; border: 1px solid #aca899; box-shadow: inset 1px 1px #716f64; }
.log p { margin: 0; }
.ok { color: #00f; }
.bad { color: #f00; }
.status { display: grid; grid-template-columns: 18px 18px 1fr 174px; gap: 3px; flex: none; height: 19px; margin-top: 1px; }
.status > span { display: flex; align-items: center; border: 1px solid; border-color: #aca899 #fff #fff #aca899; }
.device { gap: 3px; }
.last { justify-content: flex-end; }
.status > .last { align-items: flex-end; border-right: 0; }
.sizer { width: 12px; height: 12px; }
</style>
